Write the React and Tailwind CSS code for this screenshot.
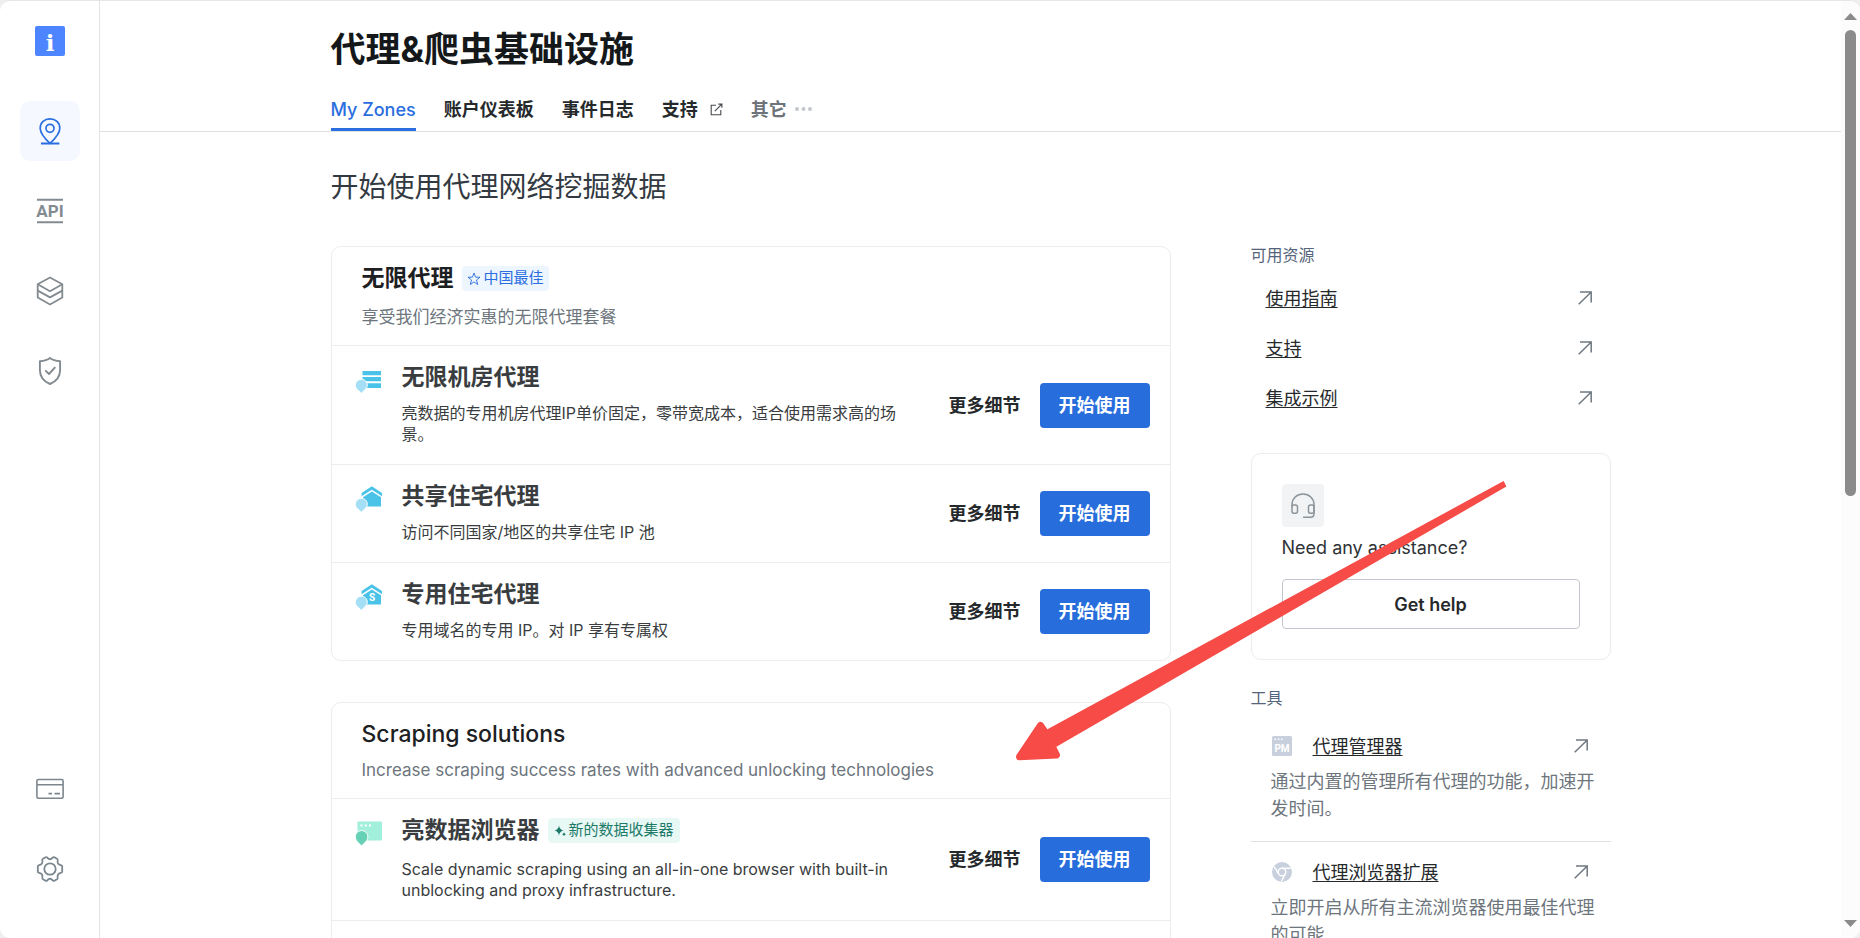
import React from 'react';

const FONT = "font-[Inter,'Noto_Sans_CJK_SC',sans-serif]";

function PinIcon() {
  return (
    <svg width="28" height="28" viewBox="0 0 28 28" fill="none" stroke="#2a6ee0" strokeWidth="1.7" aria-hidden="true">
      <path d="M14 26.300C11.500 24 4.200 17 4.200 11.200C4.200 5.600 8.500 1.900 14 1.900S23.800 5.600 23.800 11.200C23.800 17 16.500 24 14 26.300Z" />
      <circle cx="14" cy="11.300" r="4" />
      <path d="M5 26.500H23.400" strokeWidth="1.800" />
    </svg>
  );
}

function ApiIcon() {
  return (
    <svg width="28" height="28" viewBox="0 0 28 28" aria-hidden="true">
      <path d="M1 2.700H27M1 25.200H27" stroke="#838b91" strokeWidth="2" />
      <text x="14" y="20.300" textAnchor="middle" fill="#838b91" className="font-['Roboto',sans-serif] text-[17px] font-bold">API</text>
    </svg>
  );
}

function LayersIcon() {
  return (
    <svg width="28" height="30" viewBox="0 0 28 30" fill="none" stroke="#838b91" strokeWidth="1.800" strokeLinejoin="round" aria-hidden="true">
      <path d="M14 1.500L26.300 8.200V21.500L14 28.500L1.700 21.500V8.200Z" />
      <path d="M1.700 8.200L14 15.200L26.300 8.200M1.700 14.600L14 21.400L26.300 14.600" />
    </svg>
  );
}

function ShieldIcon() {
  return (
    <svg width="28" height="30" viewBox="0 0 28 30" fill="none" stroke="#838b91" strokeWidth="1.900" strokeLinecap="round" strokeLinejoin="round" aria-hidden="true">
      <path d="M14 2C11 4.500 7.500 5 3.900 5.300V14C3.900 21 8 25.500 14 28C20 25.500 24.100 21 24.100 14V5.300C20.500 5 17 4.500 14 2Z" />
      <path d="M9.800 14.800L13 18L18.800 11.600" />
    </svg>
  );
}

function CardIcon() {
  return (
    <svg width="28" height="22" viewBox="0 0 28 22" fill="none" stroke="#7b868e" strokeWidth="1.600" aria-hidden="true">
      <rect x="0.900" y="1.500" width="26.200" height="18.700" rx="1.500" />
      <path d="M1 6.800H27" />
      <path d="M12.500 15.600H16M18.500 15.600H24" strokeWidth="1.800" />
    </svg>
  );
}

function GearIcon() {
  return (
    <svg width="28" height="28" viewBox="0 0 28 28" fill="none" stroke="#7b868e" strokeWidth="1.800" strokeLinejoin="round" aria-hidden="true">
      <path d="M11.300 2.700Q14 5.800 16.700 2.700Q17.400 1.900 18.400 2.300L21 3.800Q22 4.400 21.700 5.500Q20.800 9.300 24.800 10.200Q26.200 10.500 26.200 11.600V16.400Q26.200 17.500 24.800 17.800Q20.800 18.700 21.700 22.500Q22 23.600 21 24.200L18.400 25.700Q17.400 26.100 16.700 25.300Q14 22.200 11.300 25.300Q10.600 26.100 9.600 25.700L7 24.200Q6 23.600 6.300 22.500Q7.200 18.700 3.200 17.800Q1.800 17.500 1.800 16.400V11.600Q1.800 10.500 3.200 10.200Q7.200 9.300 6.300 5.500Q6 4.400 7 3.800L9.600 2.300Q10.600 1.900 11.300 2.700Z" />
      <circle cx="14" cy="14" r="5.700" />
    </svg>
  );
}

function Pin({ fill }) {
  return (
    <path d="M6.300 13.200A6 6 0 0 1 12.300 19.200C12.300 22.500 9.500 24 6.300 27.300C3.100 24 .3 22.500 .3 19.200A6 6 0 0 1 6.300 13.200Z" fill={fill} stroke="#fff" strokeWidth="1" />
  );
}

function ServerIcon() {
  return (
    <svg width="28" height="30" viewBox="0 0 28 30" aria-hidden="true">
      <path d="M7.500 5H26V9.300H7.500ZM7.500 11H26V15.300H7.500ZM11 17.300H26V22H11Z" fill="#4bc3e8" />
      <Pin fill="#a5dff5" />
    </svg>
  );
}

function HouseIcon({ letter }) {
  return (
    <svg width="28" height="30" viewBox="0 0 28 30" aria-hidden="true">
      <path d="M16.800 1.200L27 8V11.300L16.800 4.800L6.600 11.300V8Z" fill="#4bc3e8" />
      <path d="M16.800 6.600L26 12.300V21.500H11L8 15V12.300Z" fill="#4bc3e8" />
      {letter && (
        <text x="17" y="18" textAnchor="middle" fill="#fff" className="font-['Roboto',sans-serif] text-[10px] font-bold">{letter}</text>
      )}
      <Pin fill="#a5dff5" />
    </svg>
  );
}

function BrowserIcon() {
  return (
    <svg width="28" height="30" viewBox="0 0 28 30" aria-hidden="true">
      <rect x="2.500" y="2.500" width="24.500" height="19" rx="0.800" fill="#a2efdc" />
      <path d="M5.500 5.500h2v2h-2zM9.800 5.500h2v2h-2zM14 5.500h2v2h-2z" fill="#fff" />
      <path d="M6.600 11.500A6.300 6.300 0 0 1 12.900 17.800C12.900 21.500 9.800 23.500 6.600 27C3.400 23.500 .3 21.500 .3 17.800A6.300 6.300 0 0 1 6.600 11.500Z" fill="#66d1b5" stroke="#fff" strokeWidth="1" />
    </svg>
  );
}

function StarIcon() {
  return (
    <svg width="14" height="14" viewBox="0 0 14 14" fill="none" stroke="#2a6ee0" strokeWidth="0.900" strokeLinejoin="round" aria-hidden="true">
      <path d="M7 1L8.600 5.200H13L9.500 8L10.700 12.500L7 9.900L3.300 12.500L4.500 8L1 5.200H5.400Z" />
    </svg>
  );
}

function SparkIcon() {
  return (
    <svg width="13" height="14" viewBox="0 0 13 14" fill="#1d7a69" aria-hidden="true">
      <path d="M5 1.500Q5.600 5.700 9.600 6.500Q5.600 7.300 5 11.500Q4.400 7.300 .4 6.500Q4.400 5.700 5 1.500Z" />
      <path d="M10 8.300Q10.300 10 12 10.300Q10.300 10.600 10 12.300Q9.700 10.600 8 10.300Q9.700 10 10 8.300Z" />
    </svg>
  );
}

function ArrowIcon() {
  return (
    <svg width="16" height="16" viewBox="0 0 16 16" fill="none" stroke="#6f7880" strokeWidth="1.500" aria-hidden="true">
      <path d="M1.700 14.300L14 2.200M3 1.900H14.200V12.600" />
    </svg>
  );
}

function ExternalIcon() {
  return (
    <svg width="13" height="13" viewBox="0 0 13 13" fill="none" stroke="#454a4e" strokeWidth="1.100" aria-hidden="true">
      <path d="M6 2.200H1.200V11.800H10.800V7M4.800 8.200L11.800 1.200M8.300 1.100H11.900V4.700" />
    </svg>
  );
}

function HeadsetIcon() {
  return (
    <svg width="26" height="28" viewBox="0 0 26 28" fill="none" stroke="#8b959c" strokeWidth="1.500" strokeLinecap="round" aria-hidden="true">
      <path d="M2 14V12.500C2 6.400 6.900 2 13 2S24 6.400 24 12.500V21.500Q24 25.300 20.500 25.300H13.500" />
      <rect x="2" y="13" width="5.500" height="8.300" rx="2" />
      <rect x="18.500" y="13" width="5.500" height="8.300" rx="2" />
    </svg>
  );
}

function ManagerIcon() {
  return (
    <svg width="20" height="20" viewBox="0 0 20 20" aria-hidden="true">
      <rect width="20" height="20" rx="1.500" fill="#c8d0dd" />
      <path d="M2.500 2.500H4V4H2.500ZM5.800 2.500H7.300V4H5.800ZM9 2.500H10.500V4H9Z" fill="#fff" />
      <text x="10" y="16" textAnchor="middle" fill="#fff" className="font-['Roboto',sans-serif] text-[10px] font-bold">PM</text>
    </svg>
  );
}

function ChromeIcon() {
  return (
    <svg width="20" height="20" viewBox="0 0 20 20" fill="none" aria-hidden="true">
      <circle cx="10" cy="10" r="10" fill="#c8d0dd" />
      <circle cx="10" cy="10" r="3.800" stroke="#fff" strokeWidth="1.400" />
      <path d="M10 6.200H18.600M6.700 11.900L2.200 4.600M13.300 11.900L9.300 19.500" stroke="#fff" strokeWidth="1.400" />
    </svg>
  );
}

function NavLink({ label, active, children }) {
  return (
    <a
      href="#"
      aria-label={label}
      className={
        active
          ? 'flex size-15 items-center justify-center rounded-[10px] bg-[#f5f9ff]'
          : 'flex size-15 items-center justify-center rounded-[10px]'
      }
    >
      {children}
    </a>
  );
}

function Sidebar() {
  return (
    <nav className="flex w-25 shrink-0 flex-col items-center border-r border-[#e3e4e6] pt-[25px] pb-[39px]">
      <a href="#" aria-label="Home">
        <svg width="30" height="30" viewBox="0 0 30 30" aria-hidden="true">
          <rect width="30" height="30" rx="2" fill="#4d84ff" />
          <text x="15" y="24.500" textAnchor="middle" fill="#fff" className="font-['DejaVu_Serif',serif] text-[23px] font-bold">i</text>
        </svg>
      </a>
      <div className="mt-[45px] flex flex-col gap-5">
        <NavLink label="Proxies" active><PinIcon /></NavLink>
        <NavLink label="API"><ApiIcon /></NavLink>
        <NavLink label="Datasets"><LayersIcon /></NavLink>
        <NavLink label="Security"><ShieldIcon /></NavLink>
      </div>
      <div className="mt-auto flex flex-col gap-5">
        <NavLink label="Billing"><CardIcon /></NavLink>
        <NavLink label="Settings"><GearIcon /></NavLink>
      </div>
    </nav>
  );
}

function Header() {
  const tab = 'flex h-11 items-center border-b-3 border-transparent pt-[3px] text-[18px] whitespace-nowrap';
  return (
    <header className="border-b border-[#e0e1e3]">
      <div className="mx-auto w-full max-w-[1280px] pt-[23px]">
        <h1 className="text-[35px] leading-[50px] font-bold text-[#15181a]">代理&amp;爬虫基础设施</h1>
        <nav className="mt-[13px] flex gap-7 font-bold text-[#26292c]">
          <a href="#" className="flex h-11 items-center border-b-3 border-[#2a6ee0] pt-[3px] text-[18px] font-medium whitespace-nowrap text-[#2a6ee0]">My Zones</a>
          <a href="#" className={tab}>账户仪表板</a>
          <a href="#" className={tab}>事件日志</a>
          <a href="#" className={tab}>支持<span className="ml-3"><ExternalIcon /></span></a>
          <button type="button" className="flex h-11 items-center gap-2 border-b-3 border-transparent pt-[3px] text-[18px] whitespace-nowrap text-[#6d7378]">
            其它
            <svg width="17" height="4" viewBox="0 0 17 4" fill="#c3c8ce" aria-hidden="true">
              <circle cx="2" cy="2" r="2" />
              <circle cx="8.500" cy="2" r="2" />
              <circle cx="15" cy="2" r="2" />
            </svg>
          </button>
        </nav>
      </div>
    </header>
  );
}

function Badge({ green, children }) {
  return (
    <span
      className={
        green
          ? 'mt-1 flex h-[25px] items-center gap-[2px] rounded bg-[#e8f8f5] px-[6px] text-[15px] font-normal text-[#1d7a69]'
          : 'mt-1 flex h-[25px] items-center gap-[3px] rounded bg-[#edf5ff] px-[5px] text-[15px] font-normal text-[#2a6ee0]'
      }
    >
      {green ? <SparkIcon /> : <StarIcon />}
      {children}
    </span>
  );
}

function CardHeader({ title, subtitle, badge, latin }) {
  return (
    <div className="px-[30px] pt-[15px] pb-4">
      <div className={badge ? 'flex h-[35px] items-start gap-2' : 'flex h-8 items-start'}>
        <h3
          className={
            latin
              ? 'text-[23px] leading-8 font-medium text-[#1d2022]'
              : 'text-[23px] leading-8 font-bold text-[#1d2022]'
          }
        >
          {title}
        </h3>
        {badge}
      </div>
      <p className="mt-2 text-[17px] leading-6 text-[#6d757d]">{subtitle}</p>
    </div>
  );
}

function ProductRow({ icon, title, badge, description }) {
  return (
    <div className="flex items-center border-t border-[#ececee] pr-5 pl-[23px]">
      <div className="flex min-w-0 flex-1 gap-[19px] self-stretch pt-[15px] pb-[19px]">
        <div className="w-7 shrink-0 pt-[5px]">{icon}</div>
        <div className="max-w-[512px]">
          <div className={badge ? 'flex h-[35px] items-start gap-2' : 'flex h-8 items-start'}>
            <h4 className="text-[23px] leading-8 font-bold text-[#3a3d40]">{title}</h4>
            {badge}
          </div>
          <p className="mt-[10px] text-[16px] leading-[21px] text-[#3a3d40]">{description}</p>
        </div>
      </div>
      <button type="button" className="shrink-0 pr-[19px] pl-5 text-[18px] font-bold text-[#26292c]">更多细节</button>
      <button type="button" className="h-[45px] w-[110px] shrink-0 rounded bg-[#286ddc] text-[18px] font-bold text-white">开始使用</button>
    </div>
  );
}

function Resource({ children }) {
  return (
    <li className="flex h-[50px] items-center justify-between pr-[18px] pl-[15px]">
      <a href="#" className="text-[18px] text-[#26292c] underline underline-offset-2">{children}</a>
      <ArrowIcon />
    </li>
  );
}

function Tool({ icon, title, children }) {
  return (
    <li className="border-b border-[#dfe0e2] pt-4 pb-[19px]">
      <div className="flex h-7 items-center pr-[22px] pl-[21px]">
        {icon}
        <a href="#" className="ml-[21px] text-[18px] text-[#26292c] underline underline-offset-2">{title}</a>
        <span className="ml-auto"><ArrowIcon /></span>
      </div>
      <p className="mt-2 pr-4 pl-5 text-[18px] leading-[27px] text-[#6d757d]">{children}</p>
    </li>
  );
}

function Aside() {
  return (
    <aside className="w-[360px] shrink-0">
      <h3 className="mb-[9px] text-[16px] leading-[18px] text-[#55647a]">可用资源</h3>
      <ul>
        <Resource>使用指南</Resource>
        <Resource>支持</Resource>
        <Resource>集成示例</Resource>
      </ul>
      <section className="mt-[30px] rounded-[10px] border border-[#ececee] p-[30px]">
        <div className="flex h-[43px] w-[42px] items-center justify-center rounded bg-[#f1f3f5]">
          <HeadsetIcon />
        </div>
        <p className="mt-2 text-[18px] leading-[26px] text-[#303336]">Need any assistance?</p>
        <button type="button" className="mt-[18px] h-[50px] w-full rounded border border-[#c3c6cc] text-[18px] font-semibold text-[#26292c]">Get help</button>
      </section>
      <h3 className="mt-7 mb-2 text-[16px] leading-5 text-[#55647a]">工具</h3>
      <ul>
        <Tool icon={<ManagerIcon />} title="代理管理器">通过内置的管理所有代理的功能，加速开发时间。</Tool>
        <Tool icon={<ChromeIcon />} title="代理浏览器扩展">立即开启从所有主流浏览器使用最佳代理的可能</Tool>
      </ul>
    </aside>
  );
}

function ScrollTrack() {
  return (
    <div aria-hidden="true" className="flex w-[19px] shrink-0 flex-col items-center bg-[#fcfcfc] pt-3 pb-[11px]">
      <svg width="13" height="7" viewBox="0 0 13 7" fill="#8b8b8b"><path d="M0 7L6.500 0L13 7Z" /></svg>
      <div className="mt-[10px] h-[51%] w-[11px] rounded-full bg-[#8b8b8b]" />
      <svg className="mt-auto" width="13" height="7" viewBox="0 0 13 7" fill="#8b8b8b"><path d="M0 0L6.500 7L13 0Z" /></svg>
    </div>
  );
}

function Pointer() {
  return (
    <svg className="pointer-events-none absolute top-[480px] left-[1015px]" width="494" height="284" viewBox="1015 480 494 284" fill="#f64b47" aria-hidden="true">
      <path d="M1503.600 481L1506.400 486.500L1056 747L1047 729.500Z" />
      <path d="M1040.500 725.500L1047 735L1052 746L1056.500 755L1019.500 756.800Z" stroke="#f64b47" strokeWidth="7" strokeLinejoin="round" />
    </svg>
  );
}

export default function App() {
  return (
    <div className={`${FONT} relative h-screen overflow-hidden bg-[#efefef]`}>
      <div className="flex h-full overflow-hidden rounded-[10px] border-t border-[#e6e6e6] bg-white">
        <Sidebar />
        <div className="min-w-0 flex-1 overflow-hidden">
          <Header />
          <main className="mx-auto w-full max-w-[1280px] pt-[35px]">
            <h2 className="text-[28px] leading-10 text-[#333a42]">开始使用代理网络挖掘数据</h2>
            <div className="mt-[39px] flex items-start gap-20">
              <div className="flex min-w-0 flex-1 flex-col gap-[41px]">
                <section className="rounded-[10px] border border-[#ececee]">
                  <CardHeader title="无限代理" badge={<Badge>中国最佳</Badge>} subtitle="享受我们经济实惠的无限代理套餐" />
                  <ProductRow icon={<ServerIcon />} title="无限机房代理" description="亮数据的专用机房代理IP单价固定，零带宽成本，适合使用需求高的场景。" />
                  <ProductRow icon={<HouseIcon />} title="共享住宅代理" description="访问不同国家/地区的共享住宅 IP 池" />
                  <ProductRow icon={<HouseIcon letter="S" />} title="专用住宅代理" description="专用域名的专用 IP。对 IP 享有专属权" />
                </section>
                <section className="rounded-[10px] border border-[#ececee]">
                  <CardHeader latin title="Scraping solutions" subtitle="Increase scraping success rates with advanced unlocking technologies" />
                  <ProductRow
                    icon={<BrowserIcon />}
                    title="亮数据浏览器"
                    badge={<Badge green>新的数据收集器</Badge>}
                    description="Scale dynamic scraping using an all-in-one browser with built-in unblocking and proxy infrastructure."
                  />
                  <div className="h-24 border-t border-[#ececee]" />
                </section>
              </div>
              <Aside />
            </div>
          </main>
        </div>
        <ScrollTrack />
      </div>
      <Pointer />
    </div>
  );
}
